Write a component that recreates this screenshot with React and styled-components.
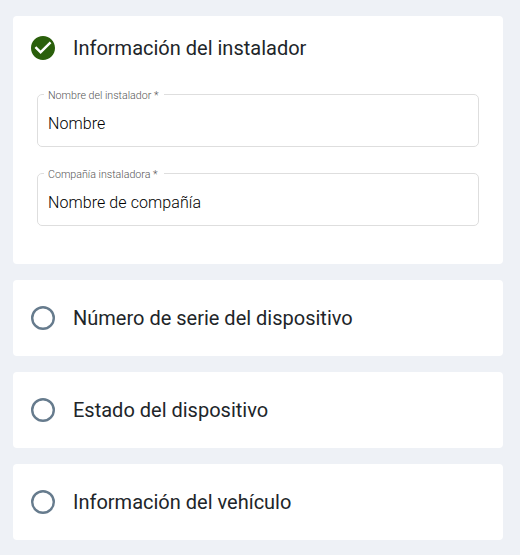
import React from 'react';
import styled, { createGlobalStyle } from 'styled-components';

const GlobalStyle = createGlobalStyle`
  body {
    margin: 0;
    background: #eef1f6;
    color: #212529;
    font-family: Roboto, "Liberation Sans", sans-serif;
  }
`;

const Page = styled.main`
  min-height: 555px;
  box-sizing: border-box;
  padding: 16px 17px 15px 13px;
  display: flex;
  flex-direction: column;
  gap: 16px;
`;

const Card = styled.section`
  background: #fff;
  border-radius: 4px;
  padding: ${props => (props.$open ? '0 24px 38px' : '0 24px')};
`;

const CardHeader = styled.header`
  height: ${props => (props.$open ? '64px' : '76px')};
  margin-left: -6px;
  display: flex;
  align-items: center;
  gap: 18px;
`;

const StatusIcon = styled.svg`
  display: block;
  width: 24px;
  height: 24px;
  flex: none;
`;

const Title = styled.h2`
  margin: 0;
  font-size: 20px;
  line-height: 28px;
  font-weight: 400;
`;

const Fields = styled.div`
  padding-top: 8px;
  display: flex;
  flex-direction: column;
  gap: 20px;
`;

const Outline = styled.fieldset`
  height: 59px;
  box-sizing: border-box;
  min-width: 0;
  margin: 0;
  padding: 0 10px 0 6px;
  border: 1px solid #dedede;
  border-radius: 5px;
`;

const Label = styled.legend`
  height: 13px;
  padding: 0 6px 0 4px;
  font-size: 10.67px;
  line-height: 16px;
  font-weight: 300;
  color: #555;
  white-space: nowrap;
`;

const Value = styled.div`
  padding: 13px 0 0 4px;
  font-size: 16px;
  line-height: 20px;
  font-weight: 300;
  letter-spacing: 0.08px;
  color: #000;
`;

const CheckedIcon = () => (
  <StatusIcon viewBox="2 2 20 20" fill="#2a5f0b">
    <path d="M12 2C6.48 2 2 6.48 2 12s4.48 10 10 10 10-4.48 10-10S17.52 2 12 2zm-2 15l-5-5 1.41-1.41L10 14.17l7.59-7.59L19 8l-9 9z" />
  </StatusIcon>
);

const EmptyIcon = () => (
  <StatusIcon viewBox="0 0 24 24" fill="none" stroke="#667b8d" strokeWidth="2.4">
    <circle cx="12" cy="12" r="10.8" />
  </StatusIcon>
);

const Field = ({ label, value }) => (
  <Outline>
    <Label>{label} *</Label>
    <Value>{value}</Value>
  </Outline>
);

const Step = ({ title, done, children }) => (
  <Card $open={!!children}>
    <CardHeader $open={!!children}>
      {done ? <CheckedIcon /> : <EmptyIcon />}
      <Title>{title}</Title>
    </CardHeader>
    {children}
  </Card>
);

const App = () => {
  return (
    <>
      <GlobalStyle />
      <Page>
        <Step title="Información del instalador" done>
          <Fields>
            <Field label="Nombre del instalador" value="Nombre" />
            <Field label="Compañía instaladora" value="Nombre de compañía" />
          </Fields>
        </Step>
        <Step title="Número de serie del dispositivo" />
        <Step title="Estado del dispositivo" />
        <Step title="Información del vehículo" />
      </Page>
    </>
  );
};

export default App;
